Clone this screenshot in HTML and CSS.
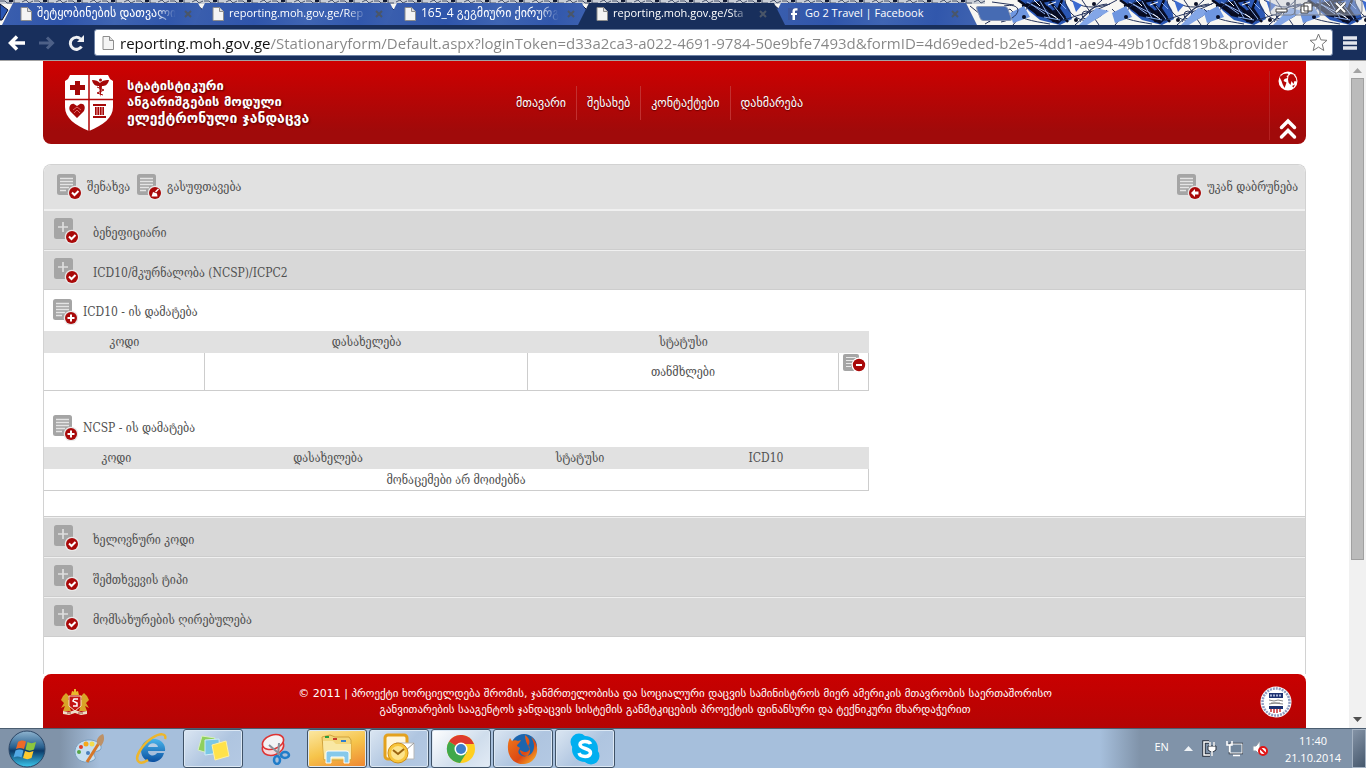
FILE: index.html
```html
<!DOCTYPE html>
<html lang="ka">
<head>
<meta charset="utf-8">
<title>სტატისტიკური ანგარიშგების მოდული</title>
<link rel="stylesheet" href="styles.css">
</head>
<body>
<svg class="defs" aria-hidden="true">
  <defs>
    <linearGradient id="orbFill" x1="0" y1="0" x2="0" y2="1"><stop offset="0" stop-color="#8fb4cf"/><stop offset=".45" stop-color="#28608f"/><stop offset=".55" stop-color="#0c3a68"/><stop offset="1" stop-color="#3bc8ee"/></linearGradient>
    <linearGradient id="ieFill" x1="0" y1="0" x2="0" y2="1"><stop offset="0" stop-color="#48b5ec"/><stop offset="1" stop-color="#0a4fa0"/></linearGradient>
    <linearGradient id="foxFill" x1="0" y1="0" x2="1" y2="1"><stop offset="0" stop-color="#ef7a1c"/><stop offset=".6" stop-color="#dd4814"/><stop offset="1" stop-color="#fbc52c"/></linearGradient>
    <symbol id="page" viewBox="0 0 12 14"><path d="M1 .5h6.500l4 4v9H1z" fill="#f4f4f4" stroke="#8d8d8d"/><path d="M7.500.5v4h4" fill="#ddd" stroke="#8d8d8d"/></symbol>
    <symbol id="cross" viewBox="0 0 8 8"><path d="M1 1l6 6M7 1L1 7" stroke="#4a5668" stroke-width="2"/></symbol>
    <symbol id="doc" viewBox="0 0 26 26"><rect x="1" y="0" width="19" height="21" rx="2.500" fill="#a5a5a5"/><path d="M4 4.500h13M4 7.500h13M4 10.500h13M4 13.500h9M4 16.500h6" stroke="#e4e4e4" stroke-width="1.300"/><circle cx="19" cy="19" r="7.300" fill="#e8e8e8"/><circle cx="19" cy="19" r="6" fill="#a90909"/></symbol>
    <symbol id="box" viewBox="0 0 26 26"><rect x="1" y="0" width="19" height="21" rx="2.500" fill="#a5a5a5"/><path d="M10 4v10M5 9h10" stroke="#dedede" stroke-width="1.700"/><circle cx="19" cy="19" r="7.300" fill="#e8e8e8"/><circle cx="19" cy="19" r="6" fill="#a90909"/><path d="M16 18.500l2.500 2.500 4-4" fill="none" stroke="#fff" stroke-width="2"/></symbol>
  </defs>
</svg>

<header class="browser">
  <div class="strip">
    <svg class="art" viewBox="0 0 1366 25" preserveAspectRatio="none" aria-hidden="true">
      <defs>
        <pattern id="ink" width="34" height="6" patternUnits="userSpaceOnUse"><rect width="34" height="6" fill="#c9ced6"/><path d="M0 1h5l2 2h5M14 0v3h6M22 2l4-2 3 3 4-2" stroke="#48536b" fill="none"/><path d="M9 0h4v2H9z" fill="#111a33"/></pattern>
        <g id="sketch">
          <path d="M10 0h44l6 10 2 9-12 6-20-5-11-9z" fill="#2a57b5"/>
          <path d="M15 2l8 5 9-4 6 9 12-4 6 9-8 7-12-6-9-2-6-7z" fill="#0a1130"/>
          <path d="M8 0l20 14 22 3M12 6l33-7M30 0l18 21M20 9c8-8 19-4 25 8M40 2l18 20M52 0l-9 22" stroke="#070b20" stroke-width="2.500" fill="none"/>
          <path d="M21 4l14 10M30 1l10 17M17 2l29 15M44 6l10 13M34 17l16 3M50 3l6 6" stroke="#8fb0ee" fill="none"/>
          <path d="M24 0l6 6M38 5l8-3M41 14l7 5" stroke="#fff" fill="none"/>
          <path d="M65 25L92 0M55 0c2 17 24 31 42 10M72 0l17 25M3 25l21-25M52 21c22-9 30-7 55-21M60 0c12 8 24 9 40 4M0 9c8 10 22 12 40 15M70 22c6-12 16-17 27-18" stroke="#26345c" fill="none"/>
          <circle cx="76" cy="15" r="4" fill="none" stroke="#26345c"/>
          <path d="M86 8l13 3-22 14h-8z" fill="#83a6e7"/><path d="M0 13l14-7 6 11-17 6z" fill="#6e96e0"/><path d="M62 0l10 5-6 7z" fill="#3c6bd0"/>
          <circle cx="14" cy="17" r="2" fill="#090e24"/><circle cx="66" cy="20" r="2" fill="#090e24"/><circle cx="84" cy="4" r="2" fill="#090e24"/>
        </g>
      </defs>
      <rect width="1366" height="25" fill="#f7f6f2"/>
      <rect width="985" height="4" fill="url(#ink)"/>
      <path d="M0 4l8 6-6 10h-2zM197 5l7 6-3 8M390 6l5 5-3 8M582 5l6 6-4 9M774 5l7 6-4 9" fill="#2a57b5" stroke="#0a1130"/>
      <use href="#sketch" x="1010"/><use href="#sketch" x="1112"/><use href="#sketch" x="1204"/><use href="#sketch" x="1300"/>
      <path d="M1004 6c20-4 18 12-3 16M985 24l25-15M970 6l20 16M992 2l22 3" stroke="#26345c" fill="none"/>
      <path d="M1270-1h25v12q0 4-4 4h-18q-3 0-3-4zM1295-1h25v16h-25zM1320-1h42v12q0 4-4 4h-38z" fill="#c6cbd6" fill-opacity=".45" stroke="#777e8e"/>
      <path d="M1276 9h11v3h-11z" fill="#fff" stroke="#444"/><path d="M1304 3h8v8h-8zM1301 6h7v7h-7z" fill="#fff" stroke="#444"/><path d="M1336 3l9 9M1345 3l-9 9" stroke="#444" stroke-width="3.500"/><path d="M1336 3l9 9M1345 3l-9 9" stroke="#fff" stroke-width="2"/>
    </svg>
    <nav class="tabs" aria-label="Tabs">
      <a class="tab" href="#"><svg class="fav"><use href="#page"/></svg><span class="tab-title geo">შეტყობინების დათვალი</span><svg class="x"><use href="#cross"/></svg></a>
      <a class="tab" href="#"><svg class="fav"><use href="#page"/></svg><span class="tab-title">reporting.moh.gov.ge/Rep</span><svg class="x"><use href="#cross"/></svg></a>
      <a class="tab" href="#"><svg class="fav"><use href="#page"/></svg><span class="tab-title geo">165_4 გეგმიური ქირურგ</span><svg class="x"><use href="#cross"/></svg></a>
      <a class="tab active" href="#"><svg class="fav"><use href="#page"/></svg><span class="tab-title">reporting.moh.gov.ge/Sta</span><svg class="x"><use href="#cross"/></svg></a>
      <a class="tab" href="#"><svg class="fav" viewBox="0 0 12 14"><rect y="1" width="12" height="12" fill="#3b559b"/><path d="M7 13V8h2V6H7V4.500c0-.8.500-1 1-1h1.500V1.300H7.500C5.500 1.300 4.500 2.500 4.500 4v2H3v2h1.500v5z" fill="#fff"/></svg><span class="tab-title whole">Go 2 Travel | Facebook</span><svg class="x"><use href="#cross"/></svg></a>
      <button class="newtab" aria-label="New tab"></button>
    </nav>
  </div>
  <div class="bar">
    <button aria-label="Back"><svg width="18" height="16" viewBox="0 0 18 16"><path d="M9 1.500L2.500 8 9 14.500M3 8h14" fill="none" stroke="#fff" stroke-width="3.500"/></svg></button>
    <button aria-label="Forward"><svg width="18" height="16" viewBox="0 0 18 16"><path d="M9 2.500L14.500 8 9 13.500M14 8H1" fill="none" stroke="#4d6087" stroke-width="3"/></svg></button>
    <button aria-label="Reload"><svg width="18" height="16" viewBox="0 0 18 16"><path d="M13.500 11.500A6 6 0 1 1 12.500 4" fill="none" stroke="#eef0f4" stroke-width="3"/><path d="M16 0v7H9z" fill="#eef0f4"/></svg></button>
    <div class="omnibox">
      <svg class="fav"><use href="#page"/></svg>
      <input class="url" type="text" aria-label="Address" value="reporting.moh.gov.ge/Stationaryform/Default.aspx?loginToken=d33a2ca3-a022-4691-9784-50e9bfe7493d&amp;formID=4d69eded-b2e5-4dd1-ae94-49b10cfd819b&amp;provider">
      <button aria-label="Bookmark"><svg width="19" height="19" viewBox="0 0 19 19"><path d="M9.500 1l2.400 5.900 6.100.4-4.700 4 1.500 6.200-5.300-3.400-5.300 3.400 1.500-6.200-4.700-4 6.100-.4z" fill="#fff" stroke="#777"/></svg></button>
    </div>
    <button aria-label="Menu"><svg width="14" height="14" viewBox="0 0 14 14"><path d="M0 2h14M0 7h14M0 12h14" stroke="#e3e7ee" stroke-width="3.500"/></svg></button>
  </div>
</header>

<div class="viewport">
  <div class="page">
    <header class="site-head">
      <a class="brand" href="#">
        <svg class="shield" viewBox="0 0 50 57" aria-hidden="true">
          <path d="M6 1h38l2 4 3 2v26c0 11-10 18-24 24C11 51 1 44 1 33V7l3-2z" fill="#fff"/>
          <path d="M25 1v56M1 25.500h48" stroke="#b20808" stroke-width="1.500"/>
          <path d="M11 7h5v4h5v5h-5v5h-5v-5H6v-5h5z" fill="#a50808"/>
          <path d="M28 6c4 0 6 1 8 3 2-2 4-3 9-3-1 5-4 6-7 6l-1.500 11L35 12c-3 0-6-1-7-6z" fill="#a50808"/><circle cx="36.500" cy="6" r="1.500" fill="#a50808"/><path d="M33 13l7 3-7 3 6 2" stroke="#a50808" fill="none"/>
          <path d="M13 44l-7-7c-2-4 1-8 4-7l3 2 3-2c4-1 6 3 4 7z" fill="#a50808"/><path d="M9 36l4-3 4 3M10 39l3-3 3 3" stroke="#d66" fill="none"/>
          <path d="M29 30h13v2H29zM31 33h9v8h-9zM29 42h13v2H29z" fill="#a50808"/><path d="M33 33v8M35.500 33v8M38 33v8" stroke="#eaa"/>
        </svg>
        <span class="brand-text">სტატისტიკური<br>ანგარიშგების მოდული<br><span class="brand-big">ელექტრონული ჯანდაცვა</span></span>
      </a>
      <nav class="menu"><a href="#">მთავარი</a><a href="#">შესახებ</a><a href="#">კონტაქტები</a><a href="#">დახმარება</a></nav>
      <div class="head-tools">
        <button aria-label="Language"><svg width="20" height="20" viewBox="0 0 20 20"><circle cx="10" cy="10" r="9.500" fill="#fff"/><path d="M1.500 6l4-3 4-.5 1 1.500-2 1 1 2-3 1-1 2 3 1.500-1 3-1 2.500-2-4-1-3zM10.500 5l2-2 3 .5 2.500 4 .5 3-2-.5-1 3-2-3-1 4-2-2.500-.5-3zM14 15l3-1.500-1.500 3z" fill="#b50606"/></svg></button>
        <button aria-label="Collapse"><svg width="18" height="22" viewBox="0 0 18 22"><path d="M2.500 9.500L9 3l6.500 6.500M2.500 19L9 12.500l6.500 6.500" fill="none" stroke="#fff" stroke-width="3.500" stroke-linecap="round"/></svg></button>
      </div>
    </header>

    <main class="panel">
      <div class="actions">
        <button class="act"><svg class="ico" viewBox="0 0 26 26"><use href="#doc"/><path d="M16 18.500l2.500 2.500 4-4" fill="none" stroke="#fff" stroke-width="2"/></svg>შენახვა</button>
        <button class="act"><svg class="ico" viewBox="0 0 26 26"><use href="#doc"/><path d="M22.500 15l-3 3" stroke="#fff" stroke-width="1.500"/><path d="M17 18l4 1.500.5 3h-6z" fill="#fff"/></svg>გასუფთავება</button>
        <button class="act back"><svg class="ico" viewBox="0 0 26 26"><use href="#doc"/><path d="M15 19l4-4v2.500h3.500v3H19V23z" fill="#fff"/></svg>უკან დაბრუნება</button>
      </div>
      <button class="row"><svg class="ico"><use href="#box"/></svg><span>ბენეფიციარი</span></button>
      <button class="row"><svg class="ico"><use href="#box"/></svg><span>ICD10/მკურნალობა (NCSP)/ICPC2</span></button>
      <section class="body">
        <button class="add"><svg class="ico" viewBox="0 0 26 26"><use href="#doc"/><path d="M19 15.500v7M15.500 19h7" stroke="#fff" stroke-width="2"/></svg>ICD10 - ის დამატება</button>
        <table class="grid">
          <colgroup><col class="c161"><col class="c323"><col class="c311"><col class="c30"></colgroup>
          <thead><tr><th>კოდი</th><th>დასახელება</th><th>სტატუსი</th><th></th></tr></thead>
          <tbody><tr class="tall"><td></td><td></td><td>თანმხლები</td><td class="del"><button aria-label="წაშლა"><svg width="24" height="20" viewBox="0 0 24 20"><rect x="1" y="1" width="16" height="17" rx="2" fill="#a5a5a5"/><path d="M4 4.500h10M4 7.500h10M4 10.500h7M4 13.500h5" stroke="#e8e8e8"/><circle cx="17" cy="12" r="7.500" fill="#fff"/><circle cx="17" cy="12" r="6.200" fill="#a90909"/><path d="M14 12h6" stroke="#fff" stroke-width="2"/></svg></button></td></tr></tbody>
        </table>
        <button class="add second"><svg class="ico" viewBox="0 0 26 26"><use href="#doc"/><path d="M19 15.500v7M15.500 19h7" stroke="#fff" stroke-width="2"/></svg>NCSP - ის დამატება</button>
        <table class="grid">
          <colgroup><col class="c145"><col class="c278"><col class="c226"><col class="c146"><col class="c30"></colgroup>
          <thead><tr><th>კოდი</th><th>დასახელება</th><th>სტატუსი</th><th>ICD10</th><th></th></tr></thead>
          <tbody><tr><td colspan="5">მონაცემები არ მოიძებნა</td></tr></tbody>
        </table>
      </section>
      <button class="row"><svg class="ico"><use href="#box"/></svg><span>ხელოვნური კოდი</span></button>
      <button class="row"><svg class="ico"><use href="#box"/></svg><span>შემთხვევის ტიპი</span></button>
      <button class="row"><svg class="ico"><use href="#box"/></svg><span>მომსახურების ღირებულება</span></button>
    </main>

    <footer class="site-foot">
      <svg class="arms" viewBox="0 0 30 26" aria-hidden="true">
        <path d="M11 6l1-4 3 1 3-1 1 4z" fill="#e8b82b"/><rect x="14" y="0" width="2" height="3" fill="#e8b82b"/>
        <path d="M3 7l3-3 3 3-1 4 3-1-1 9 1 3H3l2-5-4 2 3-5-3-3zM27 7l-3-3-3 3 1 4-3-1 1 9-1 3h8l-2-5 4 2-3-5 3-3z" fill="#d9a327"/>
        <path d="M9 7h12v10l-6 5-6-5z" fill="#c41414" stroke="#f3e2c0"/><path d="M18 10h-4l-1 2 4 2v3h-4" fill="none" stroke="#fff" stroke-width="1.500"/>
        <path d="M3 22l6 1 6-2 6 2 6-1v3l-6 1-6-2-6 2-6-1z" fill="#eee0c8"/><path d="M7 24h4M18 24h5" stroke="#943"/>
      </svg>
      <p>© 2011 | პროექტი ხორციელდება შრომის, ჯანმრთელობისა და სოციალური დაცვის სამინისტროს მიერ ამერიკის მთავრობის საერთაშორისო<br>განვითარების სააგენტოს ჯანდაცვის სისტემის განმტკიცების პროექტის ფინანსური და ტექნიკური მხარდაჭერით</p>
      <svg class="seal" viewBox="0 0 32 32" aria-hidden="true">
        <circle cx="16" cy="16" r="15.500" fill="#fff"/><circle cx="16" cy="16" r="13.500" fill="none" stroke="#8f9dc2" stroke-width="2.500" stroke-dasharray="2 1"/><circle cx="16" cy="16" r="11.500" fill="#fff"/>
        <rect x="9" y="7" width="14" height="5" fill="#1d3272"/><path d="M10 9.500h12" stroke="#a9b5d8" stroke-width="2" stroke-dasharray="2 1"/><path d="M9 14l5 1 4-1 5 1M11 17h9M9 18l6-1 8 1" stroke="#888" fill="none"/><path d="M9 20h14v3H9z" fill="#1d3272"/><path d="M10 23h12l-1 2-5 3-5-3z" fill="#fff"/><path d="M11 23v3M14 23v4M17 23v4M20 23v3" stroke="#c33" stroke-width="1.500"/>
      </svg>
    </footer>
  </div>
  <div class="scroll" aria-hidden="true">
    <svg width="9" height="5" viewBox="0 0 9 5"><path d="M0 5l4.500-5L9 5z" fill="#a3a3a3"/></svg>
    <div class="track"><div class="thumb"></div></div>
    <svg width="9" height="5" viewBox="0 0 9 5"><path d="M0 0l4.500 5L9 0z" fill="#505050"/></svg>
  </div>
</div>

<footer class="taskbar">
  <button class="start" aria-label="Start"><svg width="38" height="38" viewBox="0 0 38 38"><circle cx="19" cy="19" r="18" fill="url(#orbFill)" stroke="#2c4666"/><path d="M10 12c3-2 5-2 8-.5l-2 7.500c-3-1.500-5-1.500-8 0z" fill="#ee6a28"/><path d="M19.500 12c3 1.500 5 1.500 8.500 0l-2 7.500c-3 1.500-5.500 1.500-8.500 0z" fill="#8cc63e"/><path d="M7.500 20.500c3-1.500 5-1.500 8 0l-2 7c-3-1.500-5-1.500-8 0z" fill="#52a8e4"/><path d="M17 21c3 1.500 5 1.500 8.500 0l-2 7c-3 1.500-5.500 1.500-8.500 0z" fill="#fcc92e"/></svg></button>
  <button class="task" aria-label="Paint"><svg width="32" height="32" viewBox="0 0 32 32"><path d="M2 20C1 12 9 6 18 7s12 7 9 10c-3 2-6 1-6 4s3 3 0 6C13 32 3 28 2 20z" fill="#c7dff0" stroke="#7b9fc0"/><circle cx="13" cy="11" r="2.500" fill="#f6a91c"/><circle cx="19" cy="11" r="2.500" fill="#f3dc4c"/><circle cx="8" cy="14" r="2" fill="#e0402d"/><circle cx="6" cy="19" r="2" fill="#55a544"/><circle cx="15" cy="20" r="2" fill="#4b80bb"/><path d="M14 29l12-19" stroke="#d67728" stroke-width="3"/><path d="M24 11c-1-4 1-8 6-10 2 4 1 8-2 12z" fill="#bd9167"/></svg></button>
  <button class="task" aria-label="Internet Explorer"><svg width="32" height="32" viewBox="0 0 32 32"><path d="M29 20h-7c-2 4-9 3-9-2h17c2-15-23-17-24-1 0 15 20 16 23 3z" fill="url(#ieFill)"/><path d="M13 14c1-5 9-5 10 0z" fill="#b6cde4"/><path d="M4 29c-6-4 4-18 13-24C25 0 32 0 30 6M4 29c3 2 6 0 9-2" fill="none" stroke="#edb62d" stroke-width="2.500"/></svg></button>
  <button class="task open" aria-label="Sticky Notes"><svg width="34" height="32" viewBox="0 0 34 32"><path d="M6 3l13 2-4 16-13-4z" fill="#8fd05c" stroke="#d7efc0"/><path d="M9 7l14-1 1 14-15 2z" fill="#79c7e6" stroke="#d0edf7"/><path d="M16 12l14-4 3 15-14 4z" fill="#ffe24a" stroke="#fff0a0"/></svg></button>
  <button class="task" aria-label="Snipping Tool"><svg width="32" height="32" viewBox="0 0 32 32"><ellipse cx="14" cy="14" rx="11" ry="8" fill="#f6d9dc" stroke="#d33" stroke-width="1.500" transform="rotate(-20 14 14)"/><ellipse cx="14" cy="9" rx="11" ry="7" fill="#f3f3f5" stroke="#d33" stroke-width="1.500" transform="rotate(-20 14 9)"/><path d="M10 12l14 12M20 10l-1 14" stroke="#8a929c" stroke-width="2"/><ellipse cx="26" cy="22" rx="4" ry="3" fill="none" stroke="#1f7cc9" stroke-width="2.500"/><ellipse cx="18" cy="27" rx="3" ry="4" fill="none" stroke="#1f7cc9" stroke-width="2.500"/></svg></button>
  <button class="task open hot" aria-label="Explorer"><svg width="34" height="32" viewBox="0 0 34 32"><path d="M2 4l8-2 5 2h14l2 3v20H4z" fill="#f3d77b" stroke="#d0a33e"/><path d="M5 3h4v2H5z" fill="#2a9d3b"/><path d="M13 5h4v2h-4z" fill="#c93d2b"/><path d="M21 7h5v2h-5z" fill="#2f7fcd"/><path d="M3 8h10l3 3h15v15H4z" fill="#f9e8a4"/><path d="M6 30V20q0-2 2-2h18q3 0 3 2v10h-5v-6H11v6z" fill="#86c9ea" stroke="#fff"/></svg></button>
  <button class="task open" aria-label="Outlook"><svg width="34" height="32" viewBox="0 0 34 32"><rect x="3" y="2" width="22" height="24" rx="3" fill="#fff6dc" stroke="#e3a11e" stroke-width="3"/><path d="M14 10h18v16H14z" fill="#fff" stroke="#b8b8b8"/><path d="M14 10l9 8 9-8" fill="none" stroke="#999"/><circle cx="16" cy="20" r="10" fill="#f7c63d" stroke="#d08e15"/><circle cx="16" cy="20" r="7" fill="#fde48c"/><path d="M11 17l5 4 6-5" stroke="#9b6510" stroke-width="2" fill="none"/></svg></button>
  <button class="task open lit" aria-label="Chrome"><svg width="30" height="30" viewBox="0 0 30 30"><circle cx="15" cy="15" r="14" fill="#ffcf20"/><path d="M15 15L3 7.500A14 14 0 0 1 28 10H15z" fill="#de3b2d"/><path d="M3 7.500A14 14 0 0 0 14 29l7-11-6-3z" fill="#40a84b"/><circle cx="15" cy="15" r="6.500" fill="#fff"/><circle cx="15" cy="15" r="5" fill="#3e7fc9"/></svg></button>
  <button class="task open" aria-label="Firefox"><svg width="32" height="32" viewBox="0 0 32 32"><circle cx="17" cy="14" r="13" fill="#1c65ae"/><path d="M18 2c4 3 6 7 3 11 3 0 2 7-4 6l-4-2c0 5 6 8 11 4 4-4 4-11 0-17 10 7 8 26-7 27C5 32 0 21 1 12c0-3 1-5 2-7l2 3c2-1 4-1 6 0l3-1c-1 3-4 4-4 6l3 2c-2 3-3 6 2 8 6 2 10-4 7-8-2-4-4-8-4-13z" fill="url(#foxFill)"/></svg></button>
  <button class="task open" aria-label="Skype"><svg width="32" height="32" viewBox="0 0 32 32"><circle cx="16" cy="16" r="13" fill="#00aff0"/><circle cx="10" cy="9" r="8.500" fill="#00aff0"/><circle cx="22" cy="23" r="8.500" fill="#00aff0"/><path d="M21.500 11c-1-3-10-4-10.500.5 0 5 11 3 10.500 8.500-.5 4.500-10 4.500-11.500 0" fill="none" stroke="#fff" stroke-width="3.500"/></svg></button>
  <div class="tray">
    <span class="lang">EN</span>
    <svg width="9" height="5" viewBox="0 0 9 5"><path d="M0 5l4.500-5L9 5z" fill="#eef2f6"/></svg>
    <svg width="15" height="17" viewBox="0 0 15 17"><path d="M7 2H2v13h6" fill="none" stroke="#28313d" stroke-width="3.500"/><path d="M7 2H2v13h6" fill="none" stroke="#fff" stroke-width="1.500"/><path d="M8 2v4M12 2v4M6 6h8v4l-3 2H9l-3-2zM10 11v5" fill="#fff" stroke="#28313d"/><path d="M8 2v4M12 2v4M10 11v5" stroke="#fff" stroke-width="1.500"/></svg>
    <svg width="17" height="17" viewBox="0 0 17 17"><rect x="4" y="4" width="12" height="9" fill="#71869c" stroke="#28313d" stroke-width="2.500"/><rect x="4" y="4" width="12" height="9" fill="#71869c" stroke="#fff"/><path d="M1 1v4h5V1M3.500 5v7M7 15.500h7" fill="none" stroke="#fff" stroke-width="1.500"/></svg>
    <svg width="16" height="17" viewBox="0 0 16 17"><path d="M1 6h3l4-5v14l-4-4H1z" fill="#fff" stroke="#8b98a6"/><circle cx="11" cy="11" r="4" fill="#fff" stroke="#e01616" stroke-width="2"/><path d="M8 8l6 6" stroke="#e01616" stroke-width="2"/></svg>
    <time class="clock">11:40<br>21.10.2014</time>
    <button class="desk" aria-label="Show desktop"></button>
  </div>
</footer>
</body>
</html>
```

FILE: styles.css
```css
* { box-sizing: border-box; }
html, body { height: 100%; margin: 0; }
body { display: flex; flex-direction: column; overflow: hidden; background: #fff; color: #505050; font: 12px/16px "DejaVu Serif Condensed", "DejaVu Serif", serif; }
button { border: 0; padding: 0; background: none; color: inherit; font: inherit; text-align: left; display: flex; align-items: center; }
a { color: inherit; text-decoration: none; }
svg { display: block; flex: none; }
.defs { position: absolute; width: 0; height: 0; }

.browser { flex: none; background: #182f5c; border-bottom: 1px solid #a3a3a3; }
.strip { position: relative; height: 25px; overflow: hidden; }
.art { position: absolute; inset: 0; width: 100%; height: 100%; }
.tabs { position: relative; display: flex; padding: 3px 0 0 2px; font: 11px/20px "Open Sans", "DejaVu Sans", sans-serif; color: #fff; }
.tab { display: flex; align-items: center; width: 207px; height: 22px; margin-right: -15px; padding: 0 18px; background: linear-gradient(100deg, #3b5fae, #2f55ab 30%, #3f65b3 55%, #3157ac 80%, #3f63b0); clip-path: polygon(0 100%, 11px 0, 196px 0, 100% 100%); }
.tab.active { background: #182f5c; z-index: 1; }
.fav { width: 12px; height: 14px; }
.tab-title { flex: 1; margin: 0 8px 2px 5px; white-space: nowrap; mask-image: linear-gradient(90deg, #000 85%, transparent); }
.geo { font-size: 12px; }
.whole { mask-image: none; }
.x { width: 8px; height: 8px; }
.newtab { width: 32px; height: 15px; margin: 3px 0 0 16px; background: #466bb3; border: 1px solid #8795b5; border-radius: 3px; transform: skewX(20deg); }
.bar { display: flex; align-items: center; gap: 12px; height: 35px; padding: 0 9px 0 8px; }
.omnibox { display: flex; align-items: center; flex: 1; min-width: 0; height: 27px; gap: 6px; margin: 0 -2px 0 -4px; padding: 0 4px 0 7px; background: #fff; border: 1px solid #6f83a5; border-radius: 3px; }
.url { flex: 1; min-width: 0; border: 0; padding: 0; outline: 0; font: 15px/22px "Open Sans", sans-serif; color: transparent; background: linear-gradient(90deg, #111 150px, #858585 150px); background-clip: text; -webkit-background-clip: text; }

.viewport { flex: 1; min-height: 0; display: flex; overflow: hidden; }
.page { flex: 1; min-width: 0; padding: 0 43px; overflow: hidden; }
.site-head { display: grid; grid-template-columns: 463px auto 1fr; align-items: center; height: 83px; background: linear-gradient(#cf0000, #a00a0a 85%); border-radius: 0 0 8px 8px; color: #fff; }
.brand { display: flex; align-items: center; gap: 13px; padding-left: 21px; font-weight: bold; text-shadow: 1px 1px 2px #500; }
.shield { width: 50px; height: 57px; }
.brand-text { font: bold 13px/16px "DejaVu Sans", sans-serif; white-space: nowrap; }
.brand-big { font-size: 14px; }
.menu { display: flex; font: 12px/34px "DejaVu Sans", sans-serif; text-shadow: 0 1px 1px #600; }
.menu a { padding: 0 10px; border-right: 1px solid #c23030; }
.menu a:last-child { border: 0; }
.head-tools { justify-self: end; display: flex; flex-direction: column; gap: 27px; align-items: center; margin-top: 5px; padding: 0 8px; border-left: 1px solid #b52020; }

.panel { margin-top: 20px; border: 1px solid #d2d2d2; border-bottom: 0; border-radius: 8px 8px 0 0; padding-bottom: 37px; }
.actions { display: flex; gap: 6px; height: 45px; padding: 0 7px 0 12px; background: #e1e1e1; border-bottom: 1px solid #f0f0f0; border-radius: 7px 7px 0 0; }
.act { gap: 5px; }
.back { margin-left: auto; }
.ico { width: 26px; height: 26px; }
.row { width: 100%; height: 40px; gap: 14px; padding: 2px 9px 0; background: #d8d8d8; border-top: 1px solid #f0f0f0; border-bottom: 1px solid #cdcdcd; }
.row span { padding-top: 4px; }
.body { padding: 7px 0 25px; border-bottom: 1px solid #cdcdcd; }
.add { gap: 5px; height: 29px; margin-bottom: 5px; padding-left: 8px; }
.second { margin-top: 22px; }
.grid { width: 100%; max-width: 825px; table-layout: fixed; border-spacing: 0; }
.grid th { height: 22px; padding: 0; background: #e1e1e1; font-weight: normal; }
.grid td { height: 22px; padding: 0; border: 0 solid #cdcdcd; border-width: 0 1px 1px 0; text-align: center; }
.grid .tall td { height: 38px; }
.grid .del { vertical-align: top; }
.del button { margin: 0 auto; }
.c161 { width: 161px; } .c323 { width: 323px; } .c311 { width: 311px; } .c30 { width: 30px; }
.c145 { width: 145px; } .c278 { width: 278px; } .c226 { width: 226px; } .c146 { width: 146px; }

.site-foot { display: flex; align-items: center; gap: 16px; height: 84px; padding: 0 14px 28px 17px; background: linear-gradient(#c90000, #a80606); border-radius: 8px 8px 0 0; color: #fff; font: 11px/16px "DejaVu Sans", sans-serif; }
.site-foot p { flex: 1; margin: 0; text-align: center; white-space: nowrap; }
.arms { width: 30px; height: 26px; }
.seal { width: 32px; height: 32px; }

.scroll { flex: none; width: 17px; display: flex; flex-direction: column; align-items: center; gap: 5px; padding: 7px 0 6px; background: #f1f1f1; }
.track { flex: 1; width: 13px; }
.thumb { height: 76%; background: #bbb; border: 1px solid #a0a0a0; }

.taskbar { flex: none; display: flex; gap: 2px; height: 40px; background: linear-gradient(90deg, #8093a9 60px, #a6bfdc 100px, #a6bfdc 1100px, #8093a9 1140px); border-top: 1px solid #4b5d70; color: #fff; font: 11px/17px "Open Sans", sans-serif; }
.start { width: 57px; padding-left: 8px; }
.task { justify-content: center; width: 60px; height: 39px; }
.open { background: linear-gradient(135deg, #dbe6f2, #afc5e0 55%, #b4c9e3); border: 1px solid #3f5267; border-radius: 3px; box-shadow: inset 0 0 0 1px #dce8f4; }
.hot { background: linear-gradient(160deg, #fbe9a5, #f6c44b 50%, #ee8430); }
.lit { background: linear-gradient(135deg, #fff, #cfddec 60%, #e2ebf5); }
.tray { margin-left: auto; display: flex; align-items: center; gap: 9px; }
.lang { margin-right: 6px; padding-bottom: 4px; }
.clock { margin: 0 2px 0 8px; text-align: center; }
.desk { width: 14px; height: 39px; background: linear-gradient(135deg, #8493a6, #46586d); border: 1px solid #a5b3c3; }
```
